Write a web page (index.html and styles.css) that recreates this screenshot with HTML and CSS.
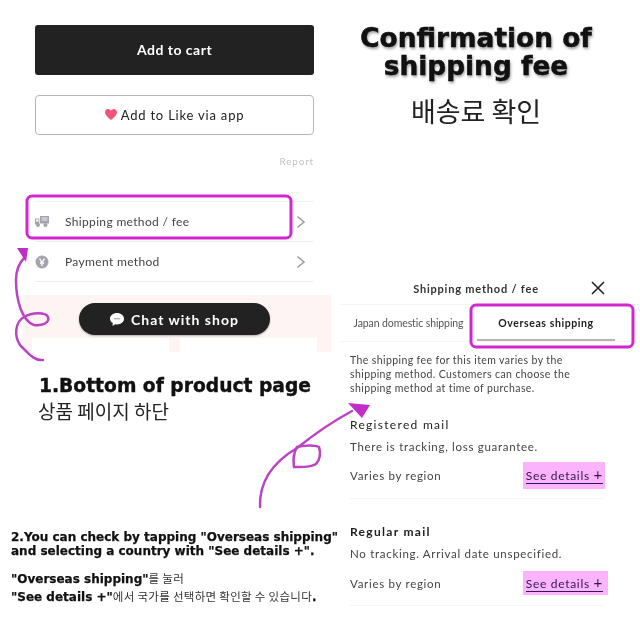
FILE: index.html
```html
<!DOCTYPE html>
<html>
<head>
<meta charset="utf-8">
<title>Confirmation of shipping fee</title>
<link rel="stylesheet" href="styles.css">
</head>
<body>
<div class="page">
	<div class="left">
		<div class="btn-cart">Add to cart</div>
		<div class="btn-like">
			<svg class="heart" width="12" height="11" viewBox="0 0 14 12" preserveAspectRatio="none"><path d="M7 12C3 9 0 6.600 0 3.600 0 1.500 1.600 0 3.500 0 5 0 6.300.8 7 2 7.700.8 9 0 10.500 0 12.400 0 14 1.500 14 3.600 14 6.600 11 9 7 12z" fill="#ee5578"/></svg>
			Add to Like via app
		</div>
		<div class="report">Report</div>
		<div class="menu">
			<div class="menu-row">
				<svg class="menu-icon" width="14" height="11" viewBox="0 0 14 11" fill="#a4a4ae"><path d="M5 0h9v7.500H5z"/><path d="M0 2.500h4.300v6H0z"/><circle cx="3" cy="9" r="2"/><circle cx="10.500" cy="9" r="2"/><path d="M6.500 2h6M6.500 4h6" stroke="#fff" stroke-width=".8"/><path d="M1 3.500h2.500v2H1z" fill="#fff"/></svg>
				<span>Shipping method / fee</span>
				<svg class="chev" width="10" height="14" viewBox="0 0 10 14"><path d="M1.500 1.500 8 7l-6.500 5.500" fill="none" stroke="#999" stroke-width="1.500"/></svg>
			</div>
			<div class="menu-row">
				<svg class="menu-icon" width="14" height="14" viewBox="0 0 14 14"><circle cx="7" cy="7" r="6.500" fill="#a4a4ae"/><path d="M4.500 3.500 7 7.500l2.500-4M7 7.500V11M5 8h4" fill="none" stroke="#fff" stroke-width="1.300"/></svg>
				<span>Payment method</span>
				<svg class="chev" width="10" height="14" viewBox="0 0 10 14"><path d="M1.500 1.500 8 7l-6.500 5.500" fill="none" stroke="#999" stroke-width="1.500"/></svg>
			</div>
		</div>
		<div class="band">
			<div class="chat-pill">
				<svg width="14" height="13" viewBox="0 0 14 13"><path d="M7 0c3.900 0 7 2.500 7 5.700s-3.100 5.700-7 5.700c-.7 0-1.300-.1-1.900-.2L2.500 13l.3-3C1.100 9 0 7.500 0 5.700 0 2.500 3.100 0 7 0z" fill="#fff"/><path d="M4.500 5.800h1M6.500 5.800h1M8.500 5.800h1" stroke="#333"/></svg>
				Chat with shop
			</div>
			<div class="band-cards">
				<div class="band-card"></div>
				<div class="band-card"></div>
			</div>
		</div>
		<h2 class="caption">1.Bottom of product page</h2>
		<div class="caption-ko">상품 페이지 하단</div>
		<p class="note">2.You can check by tapping "Overseas shipping"<br>and selecting a country with "See details +".</p>
		<p class="note note-ko">"Overseas shipping"<span class="thin">를 눌러</span><br>"See details +"<span class="thin">에서 국가를 선택하면 확인할 수 있습니다</span>.</p>
	</div>
	<div class="right">
		<h1 class="title">Confirmation of<br>shipping fee</h1>
		<div class="title-ko">배송료 확인</div>
		<div class="sheet-head">
			<span>Shipping method / fee</span>
			<svg class="close" width="14" height="14" viewBox="0 0 14 14"><path d="M1 1l12 12M13 1 1 13" stroke="#222" stroke-width="1.600"/></svg>
		</div>
		<div class="tabs">
			<div class="tab">Japan domestic shipping</div>
			<div class="tab tab-on">Overseas shipping</div>
		</div>
		<p class="desc">The shipping fee for this item varies by the shipping method. Customers can choose the shipping method at time of purchase.</p>
		<div class="method">
			<h3>Registered mail</h3>
			<p>There is tracking, loss guarantee.</p>
			<div class="price-row"><span>Varies by region</span><a class="see"><span class="see-text">See details <span class="plus">+</span></span></a></div>
		</div>
		<div class="method method-two">
			<h3>Regular mail</h3>
			<p>No tracking. Arrival date unspecified.</p>
			<div class="price-row"><span>Varies by region</span><a class="see see-two"><span class="see-text">See details <span class="plus">+</span></span></a></div>
		</div>
	</div>
	<!-- hand drawn marks on top of the screenshot -->
	<svg class="marks" width="640" height="640" viewBox="0 0 640 640" fill="none">
		<rect class="mark-box" x="27" y="196" width="264" height="42" rx="5"/>
		<rect class="mark-box" x="471" y="305" width="162" height="42" rx="5"/>
		<path class="mark-line" d="M43 360C34 361 29 354 20 345 14 336 15 322 24 317 32 312 46 312 48 317 50 323 42 326 34 325 22 321 16 300 16 280 16 270 20 262 25 257"/>
		<path class="mark-head" d="M17 248h11l-2 14z"/>
		<path class="mark-line" d="M260 507C259 480 275 461 297 448 312 436 328 424 352 411"/>
		<path class="mark-line" d="M297 447C305 445 315 445 319 447 321 453 320 460 316 464 309 468 300 467 294 467 293 460 294 452 297 447z"/>
		<path class="mark-head" d="M348 403l22 2-8 13z"/>
	</svg>
</div>
</body>
</html>
```

FILE: styles.css
```css
body {
	margin: 0;
	background-color: #fff;
}
.page {
	position: relative;
	width: 640px;
	height: 640px;
	overflow: hidden;
	display: grid;
	grid-template-columns: 340px 300px;
	font-family: "Lato", sans-serif;
	color: #333;
	filter: blur(0.45px);
}
.left {
	padding: 25px 0 0 35px;
	box-sizing: border-box;
}
.btn-cart {
	width: 279px;
	height: 50px;
	box-sizing: border-box;
	padding-bottom: 2px;
	background-color: #222;
	border-radius: 3px;
	color: #fff;
	font-size: 14px;
	font-weight: 700;
	letter-spacing: 0.5px;
	display: flex;
	align-items: center;
	justify-content: center;
}
.btn-like {
	width: 279px;
	height: 40px;
	box-sizing: border-box;
	margin-top: 20px;
	border: 1px solid #b4b4c0;
	border-radius: 4px;
	font-size: 13px;
	letter-spacing: 0.8px;
	color: #222;
	display: flex;
	align-items: center;
	justify-content: center;
	gap: 4px;
}
.heart {
	margin-top: -2px;
}
.report {
	width: 279px;
	margin-top: 19px;
	text-align: right;
	font-size: 10px;
	line-height: 14px;
	letter-spacing: 0.8px;
	color: #c4c4c8;
}
.menu {
	width: 279px;
	margin-top: 33px;
	border-top: 1px solid #f2f2f2;
}
.menu-row {
	height: 40px;
	box-sizing: border-box;
	border-bottom: 1px solid #f0f0f0;
	display: flex;
	align-items: center;
	font-size: 12px;
	letter-spacing: 0.34px;
	color: #444;
}
.menu-icon {
	width: 14px;
	margin-right: 16px;
}
.chev {
	margin-left: auto;
	margin-right: 8px;
}
.band {
	width: 308px;
	height: 57px;
	margin: 13px 0 0 -12px;
	box-sizing: border-box;
	padding-top: 8px;
	background-color: #fff4f4;
}
.chat-pill {
	width: 191px;
	height: 32px;
	margin-left: 56px;
	background-color: #222;
	border-radius: 16px;
	box-shadow: 0 1px 2px rgba(0, 0, 0, 0.3);
	color: #fff;
	font-size: 14px;
	font-weight: 700;
	letter-spacing: 1px;
	display: flex;
	align-items: center;
	justify-content: center;
	gap: 7px;
}
.band-cards {
	display: flex;
	gap: 11px;
	margin: 3px 0 0 9px;
}
.band-card {
	width: 137px;
	height: 14px;
	background-color: #fff;
}
.caption {
	margin: 23px 0 0 4px;
	font-family: "DejaVu Sans", sans-serif;
	font-size: 18.700px;
	font-weight: 700;
	line-height: 22px;
	color: #111;
	-webkit-text-stroke: 0.4px #111;
	white-space: nowrap;
}
.caption-ko {
	margin: 2px 0 0 3px;
	font-family: "Noto Sans CJK KR", sans-serif;
	font-size: 19px;
	line-height: 24px;
	color: #222;
}
.note {
	margin: 107px 0 0 -24px;
	font-family: "DejaVu Sans", sans-serif;
	font-size: 12px;
	font-weight: 700;
	line-height: 14px;
	color: #111;
	-webkit-text-stroke: 0.25px #111;
	white-space: nowrap;
}
.note-ko {
	margin-top: 12px;
	line-height: 17px;
}
.thin {
	font-family: "Noto Sans CJK KR", sans-serif;
	font-weight: 400;
	font-size: 11.500px;
	letter-spacing: 0.3px;
	color: #333;
	-webkit-text-stroke: 0;
}
.title {
	margin: 24px 0 0 0;
	width: 272px;
	font-family: "DejaVu Sans", sans-serif;
	font-size: 26.400px;
	font-weight: 700;
	line-height: 28px;
	text-align: center;
	color: #111;
	-webkit-text-stroke: 0.5px #111;
	text-shadow: 1px 2px 3px rgba(0, 0, 0, 0.4);
	white-space: nowrap;
}
.title-ko {
	width: 272px;
	margin-top: 15px;
	font-family: "Noto Sans CJK KR", sans-serif;
	font-size: 27px;
	line-height: 32px;
	text-align: center;
	color: #222;
}
.sheet-head {
	position: relative;
	width: 272px;
	margin-top: 154px;
	text-align: center;
	font-size: 11px;
	font-weight: 700;
	letter-spacing: 0.8px;
	line-height: 16px;
	color: #333;
}
.close {
	position: absolute;
	right: 7px;
	top: 0;
}
.tabs {
	display: flex;
	margin-top: 7px;
	height: 36px;
	border-top: 1px solid #f4f4f4;
	border-bottom: 1px solid #f4f4f4;
	font-size: 10.500px;
	color: #555;
}
.tab {
	width: 137px;
	text-align: center;
	line-height: 36px;
	letter-spacing: -0.1px;
	white-space: nowrap;
}
.tab-on {
	width: 138px;
	height: 36px;
	box-sizing: border-box;
	border-bottom: 2px solid #b4b4b4;
	color: #222;
	font-weight: 700;
	letter-spacing: 0.6px;
}
.desc {
	margin: 11px 0 0 10px;
	width: 240px;
	font-size: 10.500px;
	letter-spacing: 0.4px;
	line-height: 14px;
	color: #444;
}
.method {
	width: 253px;
	margin: 22px 0 0 10px;
	height: 81px;
	border-bottom: 1px solid #f4f4f4;
}
.method h3 {
	margin: 0;
	font-size: 12px;
	font-weight: 400;
	letter-spacing: 1.3px;
	line-height: 16px;
	color: #222;
}
.method p {
	margin: 6px 0 0 0;
	font-size: 11.500px;
	letter-spacing: 0.7px;
	line-height: 16px;
	color: #444;
}
.method-two {
	margin-top: 25px;
}
.method-two h3 {
	font-weight: 700;
}
.method-two .price-row {
	margin-top: 9px;
}
.price-row {
	display: flex;
	justify-content: space-between;
	align-items: center;
	margin-top: 7px;
	font-size: 11.500px;
	letter-spacing: 0.7px;
	color: #444;
}
.see {
	padding: 6px 2px 5px 3px;
	margin-right: -2px;
	background-color: #fbb4fb;
	color: #301848;
	font-size: 12px;
	letter-spacing: 0.7px;
	line-height: 15px;
	white-space: nowrap;
}
.see-two {
	padding: 5px 5px 3px 3px;
	margin-right: -5px;
}
.see-text {
	display: block;
	border-bottom: 1px solid #301848;
}
.plus {
	font-size: 15px;
	line-height: 12px;
}
.marks {
	position: absolute;
	left: 0;
	top: 0;
}
.mark-box {
	stroke: #d226cf;
	stroke-width: 3;
}
.mark-line {
	stroke: #bb44c4;
	stroke-width: 2.500;
	stroke-linecap: round;
}
.mark-head {
	fill: #c22cc8;
}
```
